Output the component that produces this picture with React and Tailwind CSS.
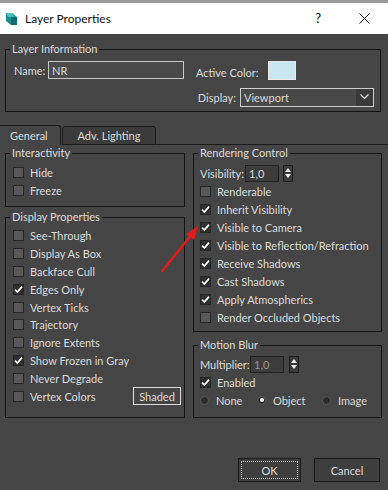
import React from "react";

function Check({ checked }) {
  return (
    <span
      className={
        "w-[11px] h-[11px] flex items-center justify-center border border-[#262626] shrink-0 " +
        (checked ? "bg-[#2f2f2f]" : "bg-[#585858]")
      }
    >
      {checked && (
        <svg width="9" height="9" viewBox="0 0 9 9">
          <path d="M1 4.6 L3.4 7 L8 1.6" fill="none" stroke="#ffffff" strokeWidth="1.7" />
        </svg>
      )}
    </span>
  );
}

function Row({ checked, label, h = "h-[18px]", children }) {
  return (
    <div className={"flex items-center whitespace-nowrap " + h}>
      <Check checked={checked} />
      <span className="ml-[6px]">{label}</span>
      {children}
    </div>
  );
}

function Radio({ on, label, className }) {
  return (
    <div className={"flex items-center " + className}>
      <span className="w-[9px] h-[9px] rounded-full bg-[#2b2b2b] border border-[#5a5a5a] flex items-center justify-center shrink-0">
        {on && <span className="w-[4px] h-[4px] rounded-full bg-white" />}
      </span>
      <span className="ml-[7px]">{label}</span>
    </div>
  );
}

function Spinner() {
  return (
    <span className="w-[10px] h-[17px] bg-[#3a3a3a] border border-[#1e1e1e] flex flex-col items-center justify-center gap-[2px]">
      <svg width="6" height="4" viewBox="0 0 6 4"><path d="M0 4 L3 0 L6 4 Z" fill="#eee" /></svg>
      <svg width="6" height="4" viewBox="0 0 6 4"><path d="M0 0 L3 4 L6 0 Z" fill="#eee" /></svg>
    </span>
  );
}

export default function App() {
  return (
    <div className="w-[388px] h-[490px] relative overflow-hidden font-['Lato',sans-serif] text-[11px] text-[#dcdcdc] leading-none whitespace-nowrap">
      <div className="h-[3px] bg-[#9a9a9a]" />
      <div className="h-[31px] bg-white flex items-center text-black relative">
        <svg className="ml-[5px]" width="13" height="14" viewBox="0 0 13 14">
          <path d="M1 1 L7 1 L12 5 L12 13 L6 13 L1 9 Z" fill="#1a8f8f" />
          <path d="M1 1 L7 1 L9 5 L3 5 Z" fill="#48c4c0" />
          <path d="M6 5 L12 5 L12 13 L6 13 Z" fill="#0f6f70" />
        </svg>
        <span className="ml-[7px] text-[12px] text-[#111]">Layer Properties</span>
        <span className="ml-auto mr-[38px] text-[13px]">?</span>
        <svg className="mr-[18px]" width="11" height="11" viewBox="0 0 11 11">
          <path d="M0.5 0.5 L10.5 10.5 M10.5 0.5 L0.5 10.5" stroke="#111" strokeWidth="1" />
        </svg>
      </div>
      <div className="bg-[#454545] h-[456px] flex flex-col">
        {/* Layer Information */}
        <fieldset className="ml-[5px] mr-[7px] mt-[7px] h-[71px] border border-[#141414] px-[8px]">
          <legend className="ml-[-4px] px-[2px] h-[16px] leading-[16px]">Layer Information</legend>
          <div className="flex items-center h-[20px] mt-[3px]">
            <span className="w-[34px]">Name:</span>
            <span className="w-[136px] h-[18px] border border-[#c8c8c8] bg-[#4a4a4a] flex items-center pl-[3px]">NR</span>
            <span className="ml-[12px] mt-[5px] w-[72px]">Active Color:</span>
            <span className="w-[28px] h-[19px] bg-[#c9e6f1] border border-[#e8e8e8]" />
          </div>
          <div className="flex items-center justify-end h-[20px] mt-[7px] mr-[-2px]">
            <span>Display:</span>
            <span className="ml-[4px] w-[134px] h-[19px] border border-[#cfcfcf] bg-[#484848] flex items-center">
              <span className="pl-[3px] flex-1">Viewport</span>
              <span className="w-[17px] h-full bg-[#3a3a3a] flex items-center justify-center">
                <svg width="9" height="6" viewBox="0 0 9 6"><path d="M0.5 0.5 L4.5 4.5 L8.5 0.5" fill="none" stroke="#eee" strokeWidth="1.2" /></svg>
              </span>
            </span>
          </div>
        </fieldset>

        {/* Tabs */}
        <div className="mt-[13px] flex items-end h-[20px]">
          <div className="w-[61px] h-[20px] border-t border-r border-[#1a1a1a] rounded-tr-[3px] flex items-center pl-[10px] bg-[#454545]">General</div>
          <div className="ml-[1px] w-[94px] h-[19px] border border-[#1a1a1a] rounded-t-[3px] bg-[#3b3b3b] flex items-center justify-center">Adv. Lighting</div>
          <div className="flex-1 h-[1px] bg-[#1a1a1a]" />
        </div>

        <div className="flex px-[5px] gap-[8px]">
          <div className="w-[180px] flex flex-col">
            <fieldset className="h-[62px] border border-[#141414] px-[7px]">
              <legend className="ml-[-3px] px-[2px] h-[16px] leading-[16px]">Interactivity</legend>
              <div className="pt-[2px]">
                <Row label="Hide" />
                <Row label="Freeze" />
              </div>
            </fieldset>
            <fieldset className="mt-[2px] h-[209px] border border-[#141414] px-[7px]">
              <legend className="ml-[-3px] px-[2px] h-[16px] leading-[16px]">Display Properties</legend>
              <div className="pt-[2px]">
                <Row h="h-[17.8px]" label="See-Through" />
                <Row h="h-[17.8px]" label="Display As Box" />
                <Row h="h-[17.8px]" label="Backface Cull" />
                <Row h="h-[17.8px]" checked label="Edges Only" />
                <Row h="h-[17.8px]" label="Vertex Ticks" />
                <Row h="h-[17.8px]" label="Trajectory" />
                <Row h="h-[17.8px]" label="Ignore Extents" />
                <Row h="h-[17.8px]" checked label="Show Frozen in Gray" />
                <Row h="h-[17.8px]" label="Never Degrade" />
                <Row h="h-[17.8px]" label="Vertex Colors">
                  <span className="ml-auto mr-[-4px] w-[48px] h-[18px] border border-[#e0e0e0] flex items-center justify-center">Shaded</span>
                </Row>
              </div>
            </fieldset>
          </div>
          <div className="w-[189px] flex flex-col">
            <fieldset className="h-[187px] border border-[#141414] px-[6px]">
              <legend className="ml-[-2px] px-[2px] h-[16px] leading-[16px]">Rendering Control</legend>
              <div className="pt-[3px]">
                <div className="flex items-center h-[18px]">
                  <span className="w-[45px]">Visibility:</span>
                  <span className="w-[34px] h-[17px] bg-[#3c3c3c] border border-[#222] flex items-center pl-[3px]">1,0</span>
                  <span className="ml-[4px]"><Spinner /></span>
                </div>
                <Row label="Renderable" />
                <Row checked label="Inherit Visibility" />
                <Row checked label="Visible to Camera" />
                <Row checked label="Visible to Reflection/Refraction" />
                <Row checked label="Receive Shadows" />
                <Row checked label="Cast Shadows" />
                <Row checked label="Apply Atmospherics" />
                <Row label="Render Occluded Objects" />
              </div>
            </fieldset>
            <fieldset className="mt-[5px] h-[81px] border border-[#141414] px-[6px]">
              <legend className="ml-[-2px] px-[2px] h-[16px] leading-[16px]">Motion Blur</legend>
              <div className="pt-[2px]">
                <div className="flex items-center h-[18px]">
                  <span className="w-[50px]">Multiplier:</span>
                  <span className="w-[34px] h-[17px] bg-[#3c3c3c] border border-[#222] flex items-center pl-[3px] text-[#9a9a9a]">1,0</span>
                  <span className="ml-[5px]"><Spinner /></span>
                </div>
                <Row checked label="Enabled" />
                <div className="flex items-center h-[18px]">
                  <Radio label="None" className="w-[57px]" />
                  <Radio on label="Object" className="w-[65px]" />
                  <Radio label="Image" />
                </div>
              </div>
            </fieldset>
          </div>
        </div>

        <div className="mt-auto mb-[8px] flex justify-end gap-[13px] pr-[8px]">
          <div className="w-[63px] h-[24px] bg-[#3e3e3e] border border-[#1a1a1a] p-[2px]">
            <div className="w-full h-full border border-dotted border-[#cfcfcf] flex items-center justify-center">OK</div>
          </div>
          <div className="w-[66px] h-[24px] bg-[#3e3e3e] border border-[#1a1a1a] flex items-center justify-center">Cancel</div>
        </div>
      </div>

      <svg className="absolute left-0 top-0 pointer-events-none" width="388" height="490">
        <line x1="162" y1="271" x2="193" y2="233" stroke="#e21b1b" strokeWidth="2.5" strokeLinecap="round" />
        <path d="M198 226 L186 234 L194 240 Z" fill="#e21b1b" />
      </svg>
    </div>
  );
}
